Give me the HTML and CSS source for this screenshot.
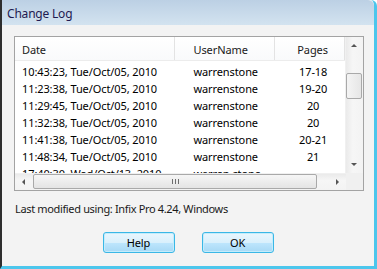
FILE: index.html
```html
<!DOCTYPE html>
<html lang="en">
<head>
    <meta charset="UTF-8">
    <title>Change Log</title>
    <link rel="stylesheet" href="styles.css">
</head>
<body>

<div class="window">
    <div class="titlebar">Change Log</div>

    <div class="client">
        <div class="listbox">
            <div class="list-main">
                <div class="grid">
                    <div class="row header">
                        <div class="col date">Date</div>
                        <div class="col user">UserName</div>
                        <div class="col pages">Pages</div>
                    </div>
                    <div class="rows">
                        <div class="row"><div class="col date">10:43:23, Tue/Oct/05, 2010</div><div class="col user">warrenstone</div><div class="col pages">17-18</div></div>
                        <div class="row"><div class="col date">11:23:38, Tue/Oct/05, 2010</div><div class="col user">warrenstone</div><div class="col pages">19-20</div></div>
                        <div class="row"><div class="col date">11:29:45, Tue/Oct/05, 2010</div><div class="col user">warrenstone</div><div class="col pages">20</div></div>
                        <div class="row"><div class="col date">11:32:38, Tue/Oct/05, 2010</div><div class="col user">warrenstone</div><div class="col pages">20</div></div>
                        <div class="row"><div class="col date">11:41:38, Tue/Oct/05, 2010</div><div class="col user">warrenstone</div><div class="col pages">20-21</div></div>
                        <div class="row"><div class="col date">11:48:34, Tue/Oct/05, 2010</div><div class="col user">warrenstone</div><div class="col pages">21</div></div>
                        <div class="row"><div class="col date">17:40:30, Wed/Oct/13, 2010</div><div class="col user">warren.stone</div><div class="col pages"></div></div>
                    </div>
                </div>
                <div class="vscroll">
                    <div class="arrow up"></div>
                    <div class="vtrack"><div class="vthumb"></div></div>
                    <div class="arrow down"></div>
                </div>
            </div>
            <div class="hscroll-row">
                <div class="hscroll">
                    <div class="arrow left"></div>
                    <div class="htrack"><div class="hthumb"><span class="grip"></span></div></div>
                    <div class="arrow right"></div>
                </div>
                <div class="corner"></div>
            </div>
        </div>

        <div class="status">Last modified using: Infix Pro 4.24, Windows</div>

        <div class="buttons">
            <button class="btn">Help</button>
            <button class="btn">OK</button>
        </div>
    </div>
</div>

</body>
</html>
```

FILE: styles.css
```css
html, body {
    margin: 0;
    padding: 0;
}
body {
    width: 377px;
    height: 269px;
    overflow: hidden;
    font-family: "Segoe UI", "Noto Sans", sans-serif;
    font-size: 11px;
    letter-spacing: -0.1px;
    color: #000;
}
.window {
    box-sizing: border-box;
    width: 377px;
    height: 269px;
    border-left: 2px solid #2e2e2e;
    border-right: 3px solid #4cc6ec;
    border-bottom: 3px solid #4cc6ec;
    border-top-right-radius: 6px;
    background: #f3f3f3;
    display: flex;
    flex-direction: column;
}
.titlebar {
    height: 25px;
    padding-left: 5px;
    font-size: 12px;
    letter-spacing: -0.2px;
    line-height: 27px;
    color: #1e1a50;
    background: linear-gradient(#bcd0e4, #d3e3f0);
    border-top-right-radius: 6px;
}
.client {
    flex: 1;
    display: flex;
    flex-direction: column;
    padding: 11px 11px 0 12px;
}

/* list box */
.listbox {
    box-sizing: border-box;
    width: 350px;
    height: 155px;
    border: 1px solid #a3a3a3;
    background: #fff;
    display: flex;
    flex-direction: column;
}
.list-main {
    flex: 1;
    display: flex;
    min-height: 0;
}
.grid {
    width: 331px;
    overflow: hidden;
}
.row {
    display: flex;
    height: 17px;
    line-height: 17px;
    white-space: nowrap;
}
.row.header {
    height: 23px;
    line-height: 26px;
    border-bottom: 1px solid #ececec;
    background: linear-gradient(#fff, #f9fafb);
    color: #1a1a1a;
}
.row.header .col {
    border-right: 1px solid #e3e3e3;
}
.rows {
    padding-top: 2px;
}
.col {
    box-sizing: border-box;
    overflow: hidden;
}
.date {
    width: 161px;
    padding-left: 7px;
}
.user {
    width: 100px;
    padding-left: 18px;
}
.pages {
    width: 70px;
    padding-left: 6px;
    text-align: center;
}

/* scroll bars */
.vscroll {
    width: 17px;
    display: flex;
    flex-direction: column;
    background: linear-gradient(90deg, #eaeaea, #f6f6f6 40%, #f3f3f3);
    border-left: 1px solid #f0f0f0;
}
.vtrack {
    flex: 1;
    position: relative;
}
.vthumb {
    position: absolute;
    left: 0;
    top: 19px;
    width: 14px;
    height: 24px;
    border: 1px solid #a9a9a9;
    border-radius: 2px;
    background: linear-gradient(90deg, #f4f4f4, #e6e6e6);
}
.arrow {
    width: 17px;
    height: 17px;
    position: relative;
}
.arrow::after {
    content: "";
    position: absolute;
    width: 0;
    height: 0;
}
.arrow.up::after {
    left: 5px;
    top: 7px;
    border-left: 3px solid transparent;
    border-right: 3px solid transparent;
    border-bottom: 3px solid #555;
}
.arrow.down::after {
    left: 5px;
    top: 7px;
    border-left: 3px solid transparent;
    border-right: 3px solid transparent;
    border-top: 3px solid #555;
}
.arrow.left::after {
    left: 7px;
    top: 5px;
    border-top: 3px solid transparent;
    border-bottom: 3px solid transparent;
    border-right: 3px solid #555;
}
.arrow.right::after {
    left: 7px;
    top: 5px;
    border-top: 3px solid transparent;
    border-bottom: 3px solid transparent;
    border-left: 3px solid #555;
}
.hscroll-row {
    height: 17px;
    display: flex;
}
.hscroll {
    width: 331px;
    display: flex;
    background: linear-gradient(#eaeaea, #f6f6f6 40%, #f3f3f3);
    border-top: 1px solid #f0f0f0;
}
.htrack {
    flex: 1;
    position: relative;
}
.hthumb {
    position: absolute;
    left: 1px;
    top: 0;
    width: 282px;
    height: 13px;
    border: 1px solid #a9a9a9;
    border-radius: 2px;
    background: linear-gradient(#f6f6f6, #e4e4e4);
}
.grip {
    position: absolute;
    left: 138px;
    top: 4px;
    width: 7px;
    height: 5px;
    background: repeating-linear-gradient(90deg, #6d6d6d 0 1px, transparent 1px 3px);
}
.corner {
    flex: 1;
    background: #f0f0f0;
}

/* bottom */
.status {
    margin-top: 9px;
    padding-left: 1px;
    line-height: 17px;
    letter-spacing: -0.35px;
    color: #1a1a1a;
}
.buttons {
    display: flex;
    justify-content: center;
    gap: 27px;
    margin-top: 15px;
    padding-right: 1px;
}
.btn {
    width: 72px;
    height: 21px;
    padding: 0;
    font-family: inherit;
    font-size: 11px;
    letter-spacing: -0.1px;
    color: #000;
    border: 1px solid #3ab7e6;
    border-radius: 3px;
    background: linear-gradient(#eaf6fd 0%, #d9f0fc 50%, #bee6fd 51%, #a7d9f5 100%);
    box-shadow: inset 0 0 0 1px #c4ecfb;
}
```
